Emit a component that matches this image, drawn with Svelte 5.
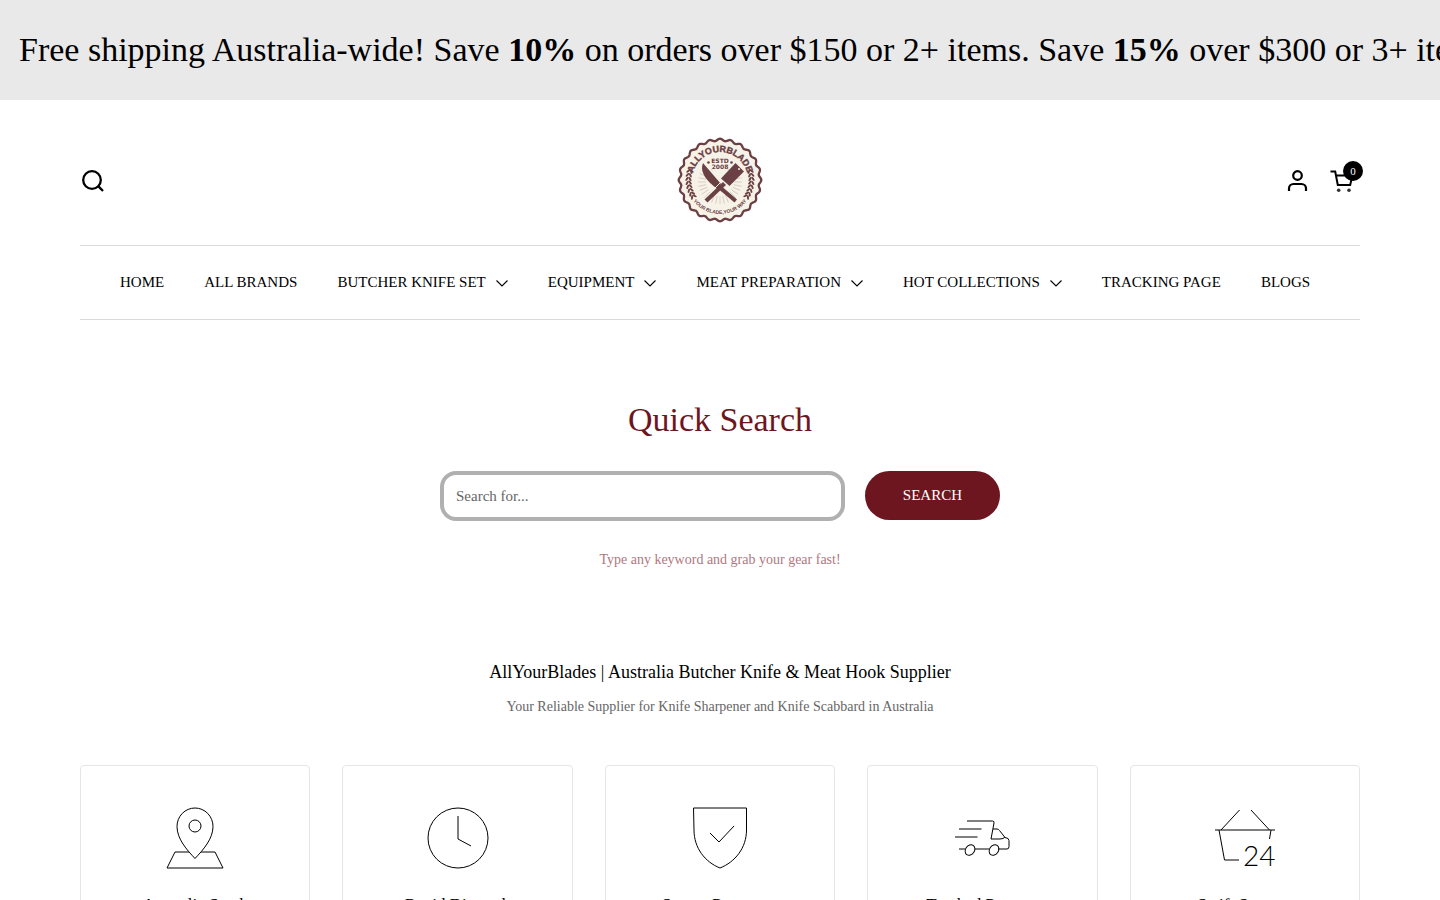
<script>
  let query = $state('');
  let cartCount = $state(0);

  const menu = [
    { label: 'Home' },
    { label: 'All Brands' },
    { label: 'Butcher Knife Set', children: true },
    { label: 'Equipment', children: true },
    { label: 'Meat Preparation', children: true },
    { label: 'Hot Collections', children: true },
    { label: 'Tracking Page' },
    { label: 'Blogs' }
  ];

  const features = [
    { icon: 'pin', title: 'Australia Stock' },
    { icon: 'clock', title: 'Rapid Dispatch' },
    { icon: 'shield', title: 'Secure Payments' },
    { icon: 'truck', title: 'Tracked Postage' },
    { icon: 'basket', title: 'Swift Support' }
  ];

  // scalloped edge of the badge
  function scallop(count, radius, depth) {
    let points = [];
    for (let i = 0; i < 360; i++) {
      const a = (i * Math.PI) / 180;
      const r = radius + depth * Math.cos(a * count);
      points.push(`${(50 + r * Math.sin(a)).toFixed(2)},${(50 - r * Math.cos(a)).toFixed(2)}`);
    }
    return points.join(' ');
  }

  const edge = scallop(24, 40.2, 1.1);
  const rays = Array.from({ length: 32 }, (_, i) => i * 11.25);
  const leaves = [-74, -81, -88, -95, -102, -109, -116, -122];
</script>

<div class="announcement">
  <p>
    Free shipping Australia-wide! Save <strong>10%</strong> on orders over $150 or 2+ items. Save
    <strong>15%</strong> over $300 or 3+ items.
  </p>
</div>

<header class="container">
  <div class="header-top">
    <div class="side">
      <button class="icon-button" aria-label="Search">
        <svg width="26" height="26" viewBox="0 0 26 26" fill="none" stroke="#000" stroke-width="2.3">
          <circle cx="12" cy="12" r="8.8" />
          <path d="M18.4 18.4L23 23" />
        </svg>
      </button>
    </div>

    <a class="logo" href="/" aria-label="AllYourBlade">
      <svg width="100" height="100" viewBox="0 0 100 100">
        <defs>
          <path id="arc-top" d="M22 50a28 28 0 0 1 56 0" />
          <path id="arc-bottom" d="M16 50a34 34 0 0 0 68 0" />
        </defs>
        <polygon points={edge} fill="#f7f2e8" stroke="#6b4044" stroke-width="2.3" />
        <g stroke="#c4b8ac" stroke-width="0.6">
          {#each rays as angle}
            <path d="M50 38V30" transform="rotate({angle} 50 52)" />
          {/each}
        </g>
        <rect x="37" y="26" width="26" height="13" fill="#f7f2e8" />
        <g fill="#6b4044">
          {#each leaves as angle}
            <ellipse cx="50" cy="17" rx="2.4" ry="1" transform="rotate({angle} 50 50) rotate(35 50 17)" />
            <ellipse cx="50" cy="20" rx="2.4" ry="1" transform="rotate({angle} 50 50) rotate(-35 50 20)" />
            <ellipse cx="50" cy="17" rx="2.4" ry="1" transform="rotate({-angle} 50 50) rotate(-35 50 17)" />
            <ellipse cx="50" cy="20" rx="2.4" ry="1" transform="rotate({-angle} 50 50) rotate(35 50 20)" />
          {/each}
          <path d="M33 33C30 40 34 48 43 55.500L46.500 58.500L51 54Z" />
          <path d="M46 57L49 54L67 69.500L64.500 72.500Z" />
          <path d="M65.500 33L74 41.500L59.500 56L51 48.500Z" />
          <path d="M53 52L56 55L37.500 72.500L34.500 69.500Z" />
          <circle cx="38.500" cy="32.500" r="1.300" />
          <circle cx="61.500" cy="32.500" r="1.300" />
        </g>
        <circle cx="69" cy="39" r="1" fill="#f7f2e8" />
        <path d="M44.500 58.500L51.500 51.500" stroke="#f7f2e8" stroke-width="1" />
        <g class="logo-text">
          <text class="logo-name"><textPath href="#arc-top" startOffset="50%">ALLYOURBLADE</textPath></text>
          <text class="logo-year" x="50" y="33">ESTD</text>
          <text class="logo-year" x="50" y="39">2008</text>
          <text class="logo-motto"><textPath href="#arc-bottom" startOffset="50%">YOUR BLADE,YOUR WAY</textPath></text>
        </g>
      </svg>
    </a>

    <div class="side right">
      <a class="icon-button" href="/account" aria-label="Account">
        <svg width="26" height="26" viewBox="0 0 26 26" fill="none" stroke="#000" stroke-width="2.2">
          <circle cx="12.500" cy="7.500" r="4.300" />
          <path d="M4 23v-2.500a4.500 4.500 0 0 1 4.500-4.500h8a4.500 4.500 0 0 1 4.500 4.500V23" />
        </svg>
      </a>
      <a class="icon-button cart" href="/cart" aria-label="Cart">
        <svg width="26" height="26" viewBox="0 0 26 26" fill="none" stroke="#000" stroke-width="2">
          <path d="M1.500 3.500h4.700l2.600 13.500h12.400l2.100-9.500H7" />
          <circle cx="9.700" cy="22.200" r="1.800" fill="#333" stroke="none" />
          <circle cx="20" cy="22.200" r="1.800" fill="#333" stroke="none" />
        </svg>
        <span class="count">{cartCount}</span>
      </a>
    </div>
  </div>

  <nav>
    <ul>
      {#each menu as item}
        <li>
          <a href="/">
            {item.label}
            {#if item.children}
              <svg width="12" height="8" viewBox="0 0 12 8" fill="none" stroke="#000" stroke-width="1.1">
                <path d="M0.500 1.500L6 7L11.500 1.500" />
              </svg>
            {/if}
          </a>
        </li>
      {/each}
    </ul>
  </nav>
</header>

<main class="container">
  <section class="quick-search">
    <h2>Quick Search</h2>
    <form onsubmit={(e) => e.preventDefault()}>
      <input type="search" aria-label="Search for" placeholder="Search for..." bind:value={query} />
      <button type="submit">SEARCH</button>
    </form>
    <p>Type any keyword and grab your gear fast!</p>
  </section>

  <section class="intro">
    <h1>AllYourBlades | Australia Butcher Knife &amp; Meat Hook Supplier</h1>
    <p>Your Reliable Supplier for Knife Sharpener and Knife Scabbard in Australia</p>
  </section>

  <section class="features">
    {#each features as feature}
      <article class="card">
        <svg width="64" height="64" viewBox="0 0 64 64" fill="none" stroke="#000">
          {#if feature.icon === 'pin'}
            <path d="M32 52.500C24 44 14 33 14 20.500a18 18.500 0 0 1 36 0C50 33 40 44 32 52.500z" />
            <circle cx="32" cy="20" r="6" />
            <path d="M26 46H12L4 62h56L52 46H38" />
          {:else if feature.icon === 'clock'}
            <circle cx="32" cy="32" r="30" />
            <path d="M32 10v23l13 7" />
          {:else if feature.icon === 'shield'}
            <path d="M5.500 2h53v22C58.500 42 47 56 32 62C17 56 6 42 6 24z" />
            <path d="M22 27l9 9L46 20" />
          {:else if feature.icon === 'truck'}
            <path d="M17 15h25.500q2 0 1.500 2L41 33h9q3.500 0 5-2M9 23h22.500M5 31h22.500M43 23h4q1.500 0 2.500 1.500l5.500 7q4 .5 4 3v6q0 2.500-2 2.500H48M9 43h6M25 43h14" />
            <ellipse cx="20" cy="44" rx="4.500" ry="5.600" transform="rotate(35 20 44)" />
            <ellipse cx="44" cy="44" rx="4.500" ry="5.600" transform="rotate(35 44 44)" />
          {:else}
            <path d="M2 24h60M26.500 4L8 24M38 4l18.500 20M6 24L11.500 54H26M58 24L56.500 33" />
            <text class="hours" x="30" y="60">24</text>
          {/if}
        </svg>
        <h3>{feature.title}</h3>
      </article>
    {/each}
  </section>
</main>

<style>
  :global(body) {
    margin: 0;
    background: #fff;
    color: #000;
    font-family: 'Liberation Serif', 'Times New Roman', serif;
  }

  a {
    color: inherit;
    text-decoration: none;
  }

  h1, h2, h3, p {
    margin: 0;
    font-weight: 400;
  }

  .container {
    max-width: 1280px;
    margin: 0 auto;
    padding: 0 80px;
  }

  .announcement {
    overflow: hidden;
    background: #e9e9e9;
  }

  .announcement p {
    padding-left: 19px;
    font-size: 34px;
    line-height: 100px;
    white-space: nowrap;
  }

  .header-top {
    display: grid;
    grid-template-columns: 1fr auto 1fr;
    align-items: center;
    padding: 30px 0 15px;
    border-bottom: 1px solid #d9d9d9;
  }

  .side {
    display: flex;
    gap: 18px;
    padding-top: 2px;
  }

  .right {
    justify-content: flex-end;
    padding-right: 5px;
  }

  .icon-button {
    position: relative;
    display: block;
    padding: 0;
    border: none;
    background: none;
    cursor: pointer;
  }

  svg {
    display: block;
  }

  .count {
    position: absolute;
    top: -7px;
    right: -8px;
    width: 20px;
    border-radius: 50%;
    background: #000;
    color: #fff;
    font-size: 11px;
    line-height: 20px;
    text-align: center;
  }

  .logo-text {
    fill: #6b4044;
    font-family: 'Liberation Sans', Arial, sans-serif;
    font-weight: 700;
    text-anchor: middle;
  }

  .logo-name {
    font-size: 9px;
    stroke: #6b4044;
    stroke-width: 0.4;
  }

  .logo-year {
    font-family: 'DejaVu Sans', sans-serif;
    font-size: 6px;
  }

  .logo-motto {
    font-size: 5px;
  }

  nav {
    border-bottom: 1px solid #d9d9d9;
  }

  ul {
    display: flex;
    gap: 40px;
    margin: 0;
    padding: 0 40px;
    list-style: none;
  }

  li a {
    display: flex;
    align-items: center;
    gap: 10px;
    font-size: 15px;
    line-height: 73px;
    text-transform: uppercase;
    white-space: nowrap;
  }

  .quick-search {
    display: flex;
    flex-direction: column;
    align-items: center;
    padding-top: 80px;
    text-align: center;
  }

  h2 {
    color: #6e1620;
    font-size: 34px;
    line-height: 40px;
  }

  form {
    display: flex;
    align-items: flex-start;
    gap: 20px;
    width: 100%;
    max-width: 560px;
    margin: 31px 0 29px;
  }

  input {
    box-sizing: border-box;
    flex: 1;
    min-width: 0;
    height: 50px;
    padding: 0 12px;
    border: 4px solid #b0b0b0;
    border-radius: 16px;
    background: #fff;
    font-family: inherit;
    font-size: 15px;
    appearance: none;
  }

  input::placeholder {
    color: #666;
  }

  form button {
    height: 49px;
    padding: 0 38px;
    border: none;
    border-radius: 25px;
    background: #6e1620;
    color: #fff;
    font-family: inherit;
    font-size: 15px;
    cursor: pointer;
  }

  .quick-search p {
    color: #b07880;
    font-size: 14px;
    line-height: 20px;
  }

  .intro {
    padding: 90px 0 48px;
    text-align: center;
  }

  h1 {
    font-size: 18px;
    line-height: 24px;
  }

  .intro p {
    margin-top: 13px;
    color: #666;
    font-size: 14px;
    line-height: 20px;
  }

  .features {
    display: grid;
    grid-template-columns: repeat(5, 1fr);
    gap: 32px;
    padding-bottom: 60px;
  }

  .card {
    display: flex;
    flex-direction: column;
    align-items: center;
    gap: 24px;
    padding: 40px 20px;
    border: 1px solid #e5e5e5;
    border-radius: 4px;
    text-align: center;
  }

  h3 {
    font-size: 17px;
    line-height: 22px;
  }

  .hours {
    fill: #000;
    stroke: none;
    font-family: Lato, 'Open Sans', sans-serif;
    font-size: 28px;
    font-weight: 300;
  }
</style>
